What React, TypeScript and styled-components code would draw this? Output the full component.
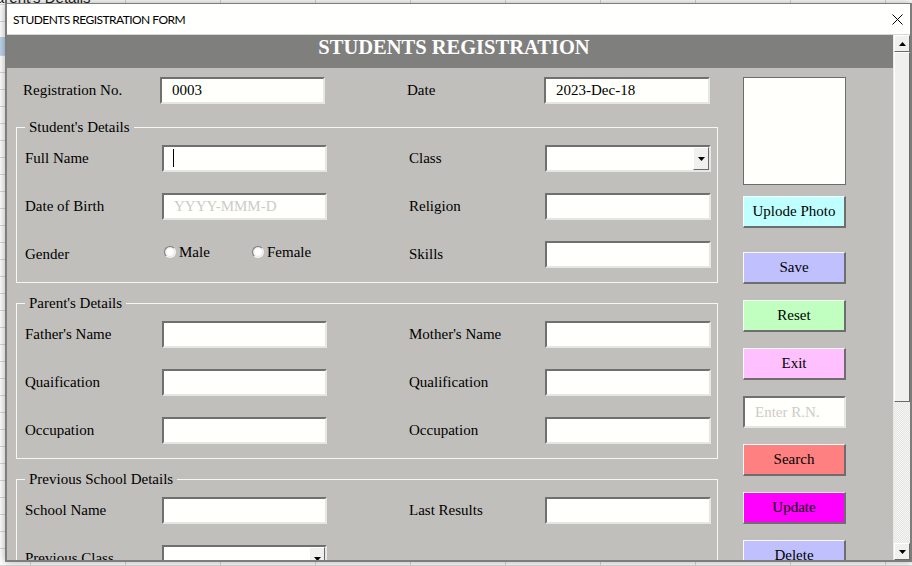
import React from "react";
import styled, { createGlobalStyle } from "styled-components";

const serif = `"Liberation Serif", "Times New Roman", serif`;

const Global = createGlobalStyle`
  html, body { margin: 0; padding: 0; width: 912px; height: 566px; overflow: hidden; background: #ffffff; }
  #root { width: 912px; height: 566px; }
  * { box-sizing: border-box; }
`;

const Desktop = styled.div`
  position: relative;
  width: 912px;
  height: 566px;
  overflow: hidden;
  background-color: #ffffff;
  background-image: linear-gradient(#d9d9d9 1px, transparent 1px),
    linear-gradient(90deg, #d9d9d9 1px, transparent 1px);
  background-size: 100% 17px, 95px 100%;
  background-position: 0 4px, 30px 0;
`;

const SheetText = styled.span`
  position: absolute;
  top: -11px;
  left: -14px;
  font: 15px "Liberation Sans", Arial, sans-serif;
  color: #222;
`;

const SheetCell = styled.div`
  position: absolute;
  left: 0;
  top: 37px;
  width: 6px;
  height: 18px;
  background: #bcd4ec;
`;

const Window = styled.div`
  position: absolute;
  left: 5px;
  top: 3px;
  width: 907px;
  height: 559px;
  display: flex;
  flex-direction: column;
  border: 1px solid #7d7d7d;
  border-left-width: 2px;
  border-right-width: 2px;
  border-bottom-width: 2px;
  background: #fffffd;
  box-shadow: 0 0 8px rgba(0, 0, 0, 0.35);
`;

const TitleBar = styled.div`
  height: 31px;
  flex-shrink: 0;
  display: flex;
  align-items: center;
  justify-content: space-between;
  padding-left: 6px;
  border-bottom: 1px solid #d6d6d6;
  background: #fffffd;
`;

const TitleText = styled.span`
  font: 12px Lato, "Liberation Sans", Arial, sans-serif;
  color: #000;
  letter-spacing: -0.55px;
`;

const CloseButton = styled.div`
  width: 26px;
  height: 30px;
  display: flex;
  align-items: center;
  justify-content: center;
`;

const ClientArea = styled.div`
  flex: 1;
  min-height: 0;
  display: flex;
`;

const Content = styled.div`
  width: 886px;
  flex-shrink: 0;
  overflow: hidden;
  background: #c0bfbb;
`;

const Header = styled.div`
  height: 33px;
  background: #7f7f7d;
  color: #ffffff;
  display: flex;
  justify-content: center;
  align-items: flex-start;
  padding: 1px 0 0 8px;
  font: bold 20.5px ${serif};
`;

const Body = styled.div`
  display: flex;
  gap: 25px;
  padding: 9px 0 0 9px;
`;

const MainCol = styled.div`
  width: 702px;
  display: flex;
  flex-direction: column;
`;

const TopRow = styled.div`
  display: flex;
  gap: 82px;
  height: 27px;
  padding-left: 7px;
  flex-shrink: 0;
`;

const Row = styled.div`
  display: flex;
  gap: 82px;
  height: 27px;
  flex-shrink: 0;
`;

const Pair = styled.div<{ $label: number; $input: number }>`
  display: grid;
  grid-template-columns: ${(p) => p.$label}px ${(p) => p.$input}px;
  align-items: center;
`;

const Label = styled.span`
  font: 15px ${serif};
  color: #000;
  white-space: nowrap;
`;

const Group = styled.fieldset<{ $mt: number }>`
  margin: ${(p) => p.$mt}px 0 0;
  padding: 9px 6px 14px 8px;
  border: 1px solid #f6f6f4;
  min-width: 0;
  width: 100%;
  display: flex;
  flex-direction: column;
  gap: 21px;
`;

const Legend = styled.legend`
  padding: 0 4px;
  font: 15px ${serif};
  line-height: 18px;
  color: #000;
`;

const TextBox = styled.input<{ $h?: number }>`
  width: 100%;
  height: ${(p) => p.$h ?? 27}px;
  margin: 0;
  padding: 0 0 0 10px;
  border: 2px solid;
  border-color: #707070 #e6e6e2 #e6e6e2 #707070;
  background: #fffffb;
  font: 15px ${serif};
  color: #000;
  outline: none;
  flex-shrink: 0;
  &::placeholder {
    color: #cdccc8;
    opacity: 1;
  }
`;

const FieldWrap = styled.div`
  position: relative;
  height: 27px;
`;

const Caret = styled.span`
  position: absolute;
  left: 11px;
  top: 4px;
  width: 1px;
  height: 18px;
  background: #000;
`;

const ComboBox = styled.div`
  height: 27px;
  display: flex;
  justify-content: flex-end;
  border: 2px solid;
  border-color: #707070 #e6e6e2 #e6e6e2 #707070;
  background: #fffffb;
`;

const DropButton = styled.div`
  width: 16px;
  height: 100%;
  display: flex;
  align-items: center;
  justify-content: center;
  background: #f0f0ee;
  border: 1px solid;
  border-color: #ffffff #6a6a6a #6a6a6a #ffffff;
`;

const RadioGroup = styled.div`
  display: flex;
  margin-bottom: 5px;
  padding-left: 2px;
`;

const RadioOption = styled.label`
  flex: none;
  width: 88px;
  display: flex;
  align-items: center;
  gap: 3px;
  font: 15px ${serif};
  color: #000;
`;

const RadioDot = styled.span`
  flex: none;
  width: 12px;
  height: 12px;
  border-radius: 50%;
  border: 1px solid;
  border-color: #7c7c7c #f4f4f4 #f4f4f4 #7c7c7c;
  background: radial-gradient(circle at 50% 50%, #ffffff 45%, #dcdcd8 75%);
`;

const SideCol = styled.div`
  width: 103px;
  display: flex;
  flex-direction: column;
`;

const Photo = styled.div`
  height: 108px;
  flex-shrink: 0;
  border: 1px solid #6c6c6c;
  background: #fffffb;
  margin-bottom: 11px;
`;

const ActionButton = styled.button<{ $bg: string; $mt: number }>`
  height: 32px;
  flex-shrink: 0;
  margin: ${(p) => p.$mt}px 0 0;
  padding: 0;
  border-style: solid;
  border-width: 1px 2px 2px 1px;
  border-color: #fafaf8 #6e6e6e #6e6e6e #fafaf8;
  background: ${(p) => p.$bg};
  font: 15px ${serif};
  color: #000;
`;

const SideInput = styled(TextBox)`
  margin-top: 16px;
`;

const ScrollBar = styled.div`
  width: 17px;
  flex-shrink: 0;
  display: flex;
  flex-direction: column;
  background: repeating-conic-gradient(#f6f6f4 0 25%, #e4e4e2 0 50%) 0 0 / 2px 2px;
  border-left: 1px solid #e8e8e6;
`;

const ScrollPart = styled.div<{ $h?: number }>`
  height: ${(p) => (p.$h ? `${p.$h}px` : "auto")};
  flex-shrink: 0;
  display: flex;
  align-items: center;
  justify-content: center;
  background: #f0f0ee;
  border: 1px solid;
  border-color: #ffffff #6a6a6a #6a6a6a #ffffff;
`;

const Track = styled.div`
  flex: 1;
`;

const Triangle = ({ down }: { down?: boolean }) => (
  <svg width="7" height="4" viewBox="0 0 7 4">
    <polygon points={down ? "0,0 7,0 3.5,4" : "0,4 7,4 3.5,0"} fill="#000" />
  </svg>
);

const CloseIcon = () => (
  <svg width="11" height="11" viewBox="0 0 11 11">
    <path d="M0.5 0.5 L10.5 10.5 M10.5 0.5 L0.5 10.5" stroke="#000" strokeWidth="1" />
  </svg>
);

const Combo = () => (
  <ComboBox>
    <DropButton>
      <Triangle down />
    </DropButton>
  </ComboBox>
);

export default function App() {
  return (
    <Desktop>
      <Global />
      <SheetText>Parent's Details</SheetText>
      <SheetCell />
      <Window>
        <TitleBar>
          <TitleText>STUDENTS REGISTRATION FORM</TitleText>
          <CloseButton>
            <CloseIcon />
          </CloseButton>
        </TitleBar>
        <ClientArea>
          <Content>
            <Header>STUDENTS REGISTRATION</Header>
            <Body>
              <MainCol>
                <TopRow>
                  <Pair $label={137} $input={165}>
                    <Label>Registration No.</Label>
                    <TextBox readOnly value="0003" />
                  </Pair>
                  <Pair $label={137} $input={166}>
                    <Label>Date</Label>
                    <TextBox readOnly value="2023-Dec-18" />
                  </Pair>
                </TopRow>

                <Group $mt={14}>
                  <Legend>Student's Details</Legend>
                  <Row>
                    <Pair $label={137} $input={165}>
                      <Label>Full Name</Label>
                      <FieldWrap>
                        <TextBox readOnly />
                        <Caret />
                      </FieldWrap>
                    </Pair>
                    <Pair $label={136} $input={166}>
                      <Label>Class</Label>
                      <Combo />
                    </Pair>
                  </Row>
                  <Row>
                    <Pair $label={137} $input={165}>
                      <Label>Date of Birth</Label>
                      <TextBox readOnly placeholder="YYYY-MMM-D" />
                    </Pair>
                    <Pair $label={136} $input={166}>
                      <Label>Religion</Label>
                      <TextBox readOnly />
                    </Pair>
                  </Row>
                  <Row>
                    <Pair $label={137} $input={165}>
                      <Label>Gender</Label>
                      <RadioGroup>
                        <RadioOption>
                          <RadioDot />
                          Male
                        </RadioOption>
                        <RadioOption>
                          <RadioDot />
                          Female
                        </RadioOption>
                      </RadioGroup>
                    </Pair>
                    <Pair $label={136} $input={166}>
                      <Label>Skills</Label>
                      <TextBox readOnly />
                    </Pair>
                  </Row>
                </Group>

                <Group $mt={11}>
                  <Legend>Parent's Details</Legend>
                  <Row>
                    <Pair $label={137} $input={165}>
                      <Label>Father's Name</Label>
                      <TextBox readOnly />
                    </Pair>
                    <Pair $label={136} $input={166}>
                      <Label>Mother's Name</Label>
                      <TextBox readOnly />
                    </Pair>
                  </Row>
                  <Row>
                    <Pair $label={137} $input={165}>
                      <Label>Quaification</Label>
                      <TextBox readOnly />
                    </Pair>
                    <Pair $label={136} $input={166}>
                      <Label>Qualification</Label>
                      <TextBox readOnly />
                    </Pair>
                  </Row>
                  <Row>
                    <Pair $label={137} $input={165}>
                      <Label>Occupation</Label>
                      <TextBox readOnly />
                    </Pair>
                    <Pair $label={136} $input={166}>
                      <Label>Occupation</Label>
                      <TextBox readOnly />
                    </Pair>
                  </Row>
                </Group>

                <Group $mt={11}>
                  <Legend>Previous School Details</Legend>
                  <Row>
                    <Pair $label={137} $input={165}>
                      <Label>School Name</Label>
                      <TextBox readOnly />
                    </Pair>
                    <Pair $label={136} $input={166}>
                      <Label>Last Results</Label>
                      <TextBox readOnly />
                    </Pair>
                  </Row>
                  <Row>
                    <Pair $label={137} $input={165}>
                      <Label>Previous Class</Label>
                      <Combo />
                    </Pair>
                  </Row>
                </Group>
              </MainCol>

              <SideCol>
                <Photo />
                <ActionButton $bg="#c0ffff" $mt={0}>Uplode Photo</ActionButton>
                <ActionButton $bg="#c0c0ff" $mt={24}>Save</ActionButton>
                <ActionButton $bg="#c0ffc0" $mt={16}>Reset</ActionButton>
                <ActionButton $bg="#ffc0ff" $mt={16}>Exit</ActionButton>
                <SideInput readOnly $h={32} placeholder="Enter R.N." />
                <ActionButton $bg="#ff8080" $mt={16}>Search</ActionButton>
                <ActionButton $bg="#ff00ff" $mt={16}>Update</ActionButton>
                <ActionButton $bg="#c0c0ff" $mt={16}>Delete</ActionButton>
              </SideCol>
            </Body>
          </Content>
          <ScrollBar>
            <ScrollPart $h={17}>
              <Triangle />
            </ScrollPart>
            <ScrollPart $h={350} />
            <Track />
            <ScrollPart $h={17}>
              <Triangle down />
            </ScrollPart>
          </ScrollBar>
        </ClientArea>
      </Window>
    </Desktop>
  );
}
